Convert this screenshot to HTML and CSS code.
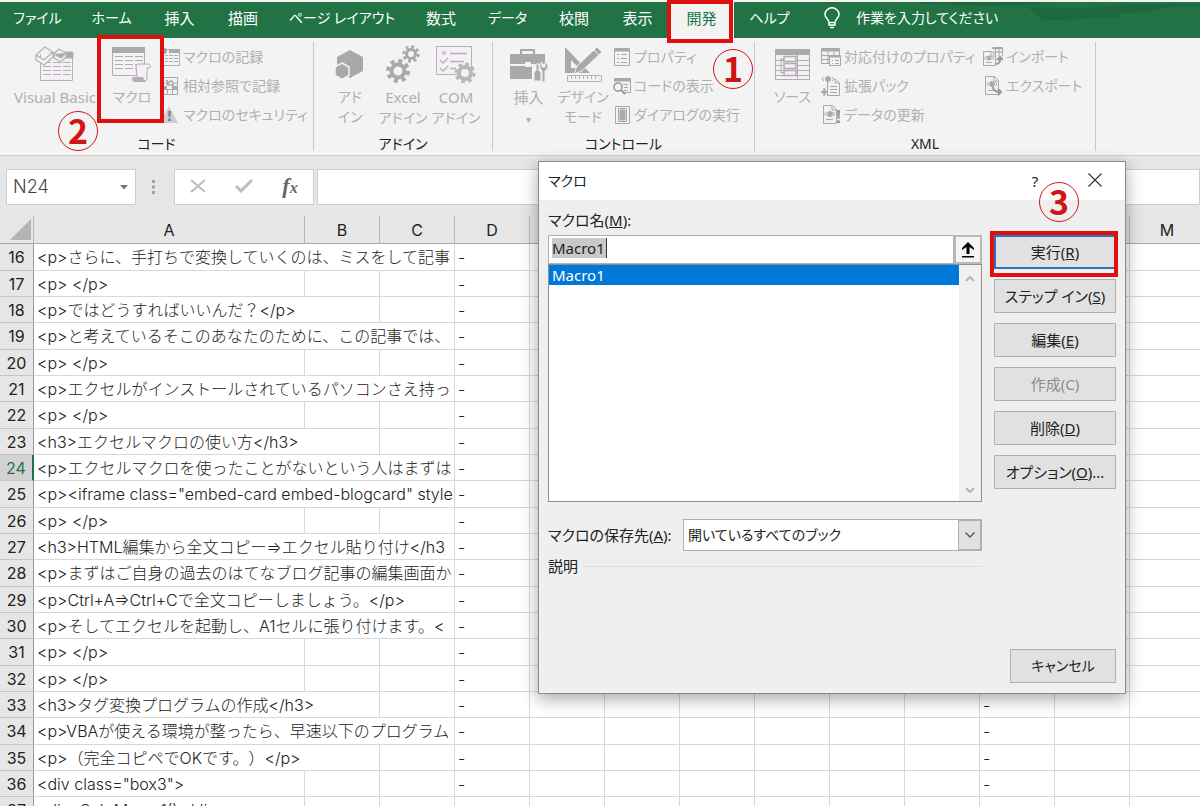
FILE: index.html
```
<!DOCTYPE html>
<html lang="ja">
<head>
    <meta charset="UTF-8">
    <meta name="viewport" content="width=device-width, initial-scale=1.0">
    <title>マクロ</title>
    <link rel="stylesheet" href="styles.css">
</head>
<body>
    <div class="app">
        <nav class="tabs">
            <button class="tab kana">ファイル</button>
            <button class="tab kana">ホーム</button>
            <button class="tab">挿入</button>
            <button class="tab">描画</button>
            <button class="tab kana">ページ レイアウト</button>
            <button class="tab">数式</button>
            <button class="tab kana">データ</button>
            <button class="tab">校閲</button>
            <button class="tab">表示</button>
            <button class="tab active">開発</button>
            <button class="tab kana">ヘルプ</button>
            <button class="tab kana tell-me">
                <svg width="16" height="22" viewBox="0 0 16 22" fill="none" stroke="#fff" stroke-width="1.5"><path d="M5 15.500C5 12 1 11.500 1 7.500a7 6.700 0 0 1 14 0C15 11.500 11 12 11 15.500zM5 15v3h6v-3M6 20.500h4"/></svg>
                作業を入力してください
            </button>
            <svg class="swirl" width="280" height="36" viewBox="0 0 280 36" fill="#1f673f"><path d="M0 0h120v2C80 4 40 3 0 2zM107 5c20 0 40 2 60 1 25-2 45-4 60-4h53v2c-20 0-35 1-40 3-20 5-30 5-45 3 12 5 5 6-10 6-30 0-55 5-65 0-5-3-8-8-13-11z"/></svg>
        </nav>

        <div class="ribbon">
            <section class="group group-code">
                <div class="group-body">
                    <button class="big" disabled>
                        <svg width="40" height="36" viewBox="0 0 40 36" fill="#f4f0f5" stroke="#b5b2b6"><path d="M5.500 6.500h32v28h-32z"/><path fill="#aaa" d="M20 6h18v6H20z"/><path fill="none" d="M8 16.500h8m2 0h8m2 0h8M8 20.500h8m2 0h8m2 0h8M8 24.500h8m2 0h8m2 0h8M8 28.500h8m2 0h8m2 0h8"/><path d="M1 9l9-8 8 5v5l-9 8-8-5zM1 9l8 5 9-8M19 8l5-5 7 4v4l-5 5-7-4zM19 8l7 4 5-5" stroke-width="1.200"/></svg>
                        <span>Visual Basic</span>
                    </button>
                    <button class="big" disabled>
                        <svg width="42" height="36" viewBox="0 0 42 36" fill="#f4f0f5" stroke="#b0adb1"><path d="M1.500 1.500h32v28h-32z"/><path fill="#aaa" stroke="none" d="M1 1h33v6H1z"/><path fill="none" d="M4 10.500h8m2 0h8m2 0h8M4 14.500h8m2 0h8m2 0h8M4 18.500h8m2 0h8m2 0h8M4 22.500h8m2 0h8m2 0h8"/><path d="M25 20c0-2 2-2 3-2h9c3 0 3 4 1 4h-2v9c0 3-1 4-3 4h-9c2 0 2-2 2-4z"/><path fill="#b5b2b6" d="M22 31.500h10c0 3 1 4 3 4H24c-3 0-3-3-2-4z"/></svg>
                        <span class="kana">マクロ</span>
                    </button>
                    <div class="small-list">
                        <button class="small" disabled><svg width="18" height="18" viewBox="0 0 18 18" fill="none" stroke="#b0adb1"><path d="M.5 1.500h17v16H.5z"/><path fill="#aaa" stroke="none" d="M7 1h11v4H7z"/><circle cx="2" cy="3" r="3" fill="#a3a3a3" stroke="none"/><path d="M3 7.500h3m1 0h4m1 0h4M3 10.500h3m1 0h4m1 0h4M3 13.500h3m1 0h4m1 0h4"/></svg>マクロの記録</button>
                        <button class="small" disabled><svg width="18" height="18" viewBox="0 0 18 18" fill="none" stroke="#aaa7ab"><path d="M.5.5h15v17H.5zM.5 12.500h15M5.500 12v5M10.500 12v5M.5 6h3M12 6h3"/><path fill="#aaa" stroke="none" d="M1 9h4v3H1zM10 9h5v3h-5z"/><path stroke-width="1.600" d="M5 8V3m0 5h5M5 8c5-9 8 0 5 3"/></svg>相対参照で記録</button>
                        <button class="small" disabled><svg width="18" height="18" viewBox="0 0 18 18"><path fill="#d0cdd1" d="M7 0l9 17H-2z"/><path fill="#888" d="M6 5h3l-.5 6h-2zM6 12.500h3V15H6z"/></svg>マクロのセキュリティ</button>
                    </div>
                </div>
                <h2>コード</h2>
            </section>

            <section class="group group-addin">
                <div class="group-body">
                    <button class="big" disabled>
                        <svg width="40" height="36" viewBox="0 0 40 36" fill="#a9a9a9"><path d="M20 4l13 7v14l-13 7-13-7V11z"/><path stroke="#f3f3f3" stroke-width="1.500" d="M12 17l7 4v8.500l-7 4-7-4V21z"/></svg>
                        <span class="kana">アド<br>イン</span>
                    </button>
                    <button class="big" disabled>
                        <svg width="40" height="36" viewBox="0 0 40 36" fill="none" stroke="#a9a9a9"><circle cx="15" cy="25" r="6.500" stroke-width="4"/><circle cx="15" cy="25" r="10" stroke-width="4" stroke-dasharray="4 3.850"/><circle cx="28" cy="8" r="4.500" stroke-width="3"/><circle cx="28" cy="8" r="7.200" stroke-width="3" stroke-dasharray="2.900 2.750"/></svg>
                        <span>Excel<br><span class="kana">アドイン</span></span>
                    </button>
                    <button class="big" disabled>
                        <svg width="42" height="38" viewBox="0 0 42 38" fill="none" stroke="#b5b2b6"><path fill="#f4f0f5" d="M1.500 1.500h35v28h-35z"/><circle cx="9" cy="8" r="1.500"/><path stroke-width="1.300" d="M5 15l3 3 5-5M5 23l3 3 5-5M15 8.500h17M15 16.500h14M15 23.500h6"/><circle cx="30" cy="28" r="6" fill="#f3f3f3" stroke="#b8b8b8" stroke-width="4"/><circle cx="30" cy="28" r="9" stroke="#b8b8b8" stroke-width="3" stroke-dasharray="3.600 3.470"/></svg>
                        <span>COM<br><span class="kana">アドイン</span></span>
                    </button>
                </div>
                <h2>アドイン</h2>
            </section>

            <section class="group group-control">
                <div class="group-body">
                    <button class="big" disabled>
                        <svg width="40" height="38" viewBox="0 0 40 38" fill="#a9a9a9"><path fill="none" stroke="#a9a9a9" stroke-width="2" d="M12 10V5h13v5"/><path d="M1 9h35v10H1zM1 21h22v13H1z"/><path fill="#f3f3f3" d="M16 17h6v5h-6z"/><path stroke="#f3f3f3" d="M27 19h3v7h2v10h-7V26h2zM33 37V26c-3-2-3-7 0-9v5h3v-5c4 2 4 7 0 9v11z"/></svg>
                        <span>挿入<br><small>▾</small></span>
                    </button>
                    <button class="big" disabled>
                        <svg width="40" height="38" viewBox="0 0 40 38" fill="#a9a9a9"><path fill-rule="evenodd" d="M2 2l25 26H2zM8 15v8h8z"/><path stroke="#f3f3f3" d="M11 29l3-8L34 2l5 5-20 19z"/><path stroke="#f3f3f3" d="M31 5l5 5"/><path fill="#f4f0f5" stroke="#b5b2b6" d="M4.500 30.500h34v6h-34z"/><path stroke="#b5b2b6" d="M8.500 31v3m4-3v3m4-3v3m4-3v3m4-3v3m4-3v3m4-3v3"/></svg>
                        <span class="kana">デザイン<br>モード</span>
                    </button>
                    <div class="small-list">
                        <button class="small" disabled><svg width="18" height="18" viewBox="0 0 18 18" fill="none" stroke="#aaa7ab"><path d="M1.500.5h15v17h-15z"/><path fill="#aaa" d="M2 1h14v2H2z"/><path d="M4 6.500h2m2 0h6M4 10.500h2m2 0h6M4 14.500h2m2 0h6"/></svg>プロパティ</button>
                        <button class="small" disabled><svg width="18" height="18" viewBox="0 0 18 18" fill="none" stroke="#aaa7ab"><path d="M1.500 5V1.500h16v14H11"/><path fill="#aaa" d="M2 2h15v2H2z"/><path d="M10 7.500h5M11 10.500h4M11 13.500h4"/><circle cx="5" cy="10" r="4" stroke="#999" stroke-width="1.600"/><path stroke="#999" stroke-width="2" d="M8 13l4 4"/></svg>コードの表示</button>
                        <button class="small" disabled><svg width="18" height="18" viewBox="0 0 18 18" fill="none" stroke="#aaa7ab"><path d="M2.500.5h14v17h-14zM5.500 2.500h8v13h-8z"/><path fill="#aaa" d="M7 4h5v10H7z"/></svg>ダイアログの実行</button>
                    </div>
                </div>
                <h2>コントロール</h2>
            </section>

            <section class="group group-xml">
                <div class="group-body">
                    <button class="big" disabled>
                        <svg width="36" height="36" viewBox="0 0 36 36" fill="#f4f0f5" stroke="#b0adb1"><path d="M.5 3.500h34v30H.5z"/><path fill="#aaa" stroke="none" d="M0 3h35v6H0z"/><path fill="none" d="M1 14.500h33M1 19.500h33M1 24.500h33M1 29.500h33M22.500 9v24M6 12v15M6 13.500h3m-3 6h3m-3 7h3"/><path stroke-width="1.500" d="M9 10.500h12v5H9zM9 17.500h12v5H9zM9 24.500h12v5H9z"/></svg>
                        <span class="kana">ソース</span>
                    </button>
                    <div class="small-list">
                        <button class="small" disabled><svg width="20" height="20" viewBox="0 0 20 20" fill="#f4f0f5" stroke="#aaa7ab"><path d="M.5 1.500h18v15H.5z"/><path fill="#aaa" d="M1 2h17v2H1z"/><path fill="none" d="M1 8.500h17M1 12.500h17M7 4v12M13 4v5"/><path d="M8.500 8.500h11v10h-11z"/><path fill="#aaa" d="M9 9h10v1H9z"/><path d="M11 13.500h1m2 0h4m-7 3h1m2 0h4"/></svg>対応付けのプロパティ</button>
                        <button class="small" disabled><svg width="20" height="20" viewBox="0 0 20 20" fill="none" stroke="#aaa7ab"><path fill="#f4f0f5" d="M6.500 6v13.500h12V7L14 2.500M14 3v4h4M9 10.500h7M9 13.500h7M9 16.500h7"/><circle cx="7" cy="3" r="2.500" fill="#aaa"/><path d="M3 1L1 3l2 2M11 1l2 2-2 2M3 12v7"/><path stroke-width="2" d="M0 16h7M3.500 12.500v7"/></svg>拡張パック</button>
                        <button class="small" disabled><svg width="20" height="20" viewBox="0 0 20 20" fill="none" stroke="#aaa7ab"><path fill="#f4f0f5" d="M2.500.5h9l4 4v14h-13zM11 1v4h4"/><circle cx="9" cy="9" r="2.500" fill="#aaa"/><path d="M5.500 7l-2 2 2 2M12 7l2 2-2 2M5 14.500h7"/><path fill="#999" stroke="none" d="M16 5h3l-.5 9h-2zM16 15.500h3V18h-3z"/></svg>データの更新</button>
                    </div>
                    <div class="small-list">
                        <button class="small" disabled><svg width="20" height="20" viewBox="0 0 20 20" fill="none" stroke="#aaa7ab"><path d="M9.500.5h10v9M9 1.500h10M10 5h9M12.500 1v7M16 1v8"/><path fill="#f4f0f5" d="M.5 4.500h8l4 4v10H.5zM8 5v4h4"/><circle cx="6" cy="11" r="2" fill="#aaa"/><path d="M3.500 9l-2 2 2 2M8.500 9l2 2-2 2M3 15.500h6"/><path stroke="#999" stroke-width="2" d="M13 17c4 0 4-3 4-6m-3 2l3-3 3 3"/></svg>インポート</button>
                        <button class="small" disabled><svg width="20" height="20" viewBox="0 0 20 20" fill="none" stroke="#aaa7ab"><path fill="#f4f0f5" d="M2.500.5h9l4 4v14h-13zM11 1v4h4"/><circle cx="9" cy="8" r="2.500" fill="#aaa"/><path d="M5.500 6l-2 2 2 2M12 6l2 2-2 2M5 14.500h5"/><path stroke="#999" stroke-width="2" d="M10 11c0 4 3 5 8 5m-3-3l3 3-3 3"/></svg>エクスポート</button>
                    </div>
                </div>
                <h2>XML</h2>
            </section>
        </div>

        <div class="formula-bar">
            <div class="name-box">
                <input type="text" value="N24" aria-label="名前ボックス">
                <svg width="8" height="5" viewBox="0 0 8 5"><path fill="#777" d="M0 0h8L4 4.500z"/></svg>
            </div>
            <svg class="dots" width="3" height="14" viewBox="0 0 3 14" fill="#a0a0a0"><path d="M0 0h3v3H0zM0 5.500h3v3H0zM0 11h3v3H0z"/></svg>
            <div class="fx-box">
                <button aria-label="キャンセル"><svg width="16" height="14" viewBox="0 0 16 14" stroke="#bdbdbd" stroke-width="2"><path d="M1 1l14 12M15 1L1 13"/></svg></button>
                <button aria-label="入力"><svg width="18" height="14" viewBox="0 0 18 14" fill="none" stroke="#bdbdbd" stroke-width="3"><path d="M1 7l5 5L17 1"/></svg></button>
                <button class="fx" aria-label="関数の挿入">f<sub>x</sub></button>
            </div>
            <input class="formula" type="text" aria-label="数式バー">
        </div>

        <table class="sheet">
            <colgroup>
                <col class="col-num"><col class="col-a">
                <col><col><col><col><col><col><col><col><col><col><col><col>
            </colgroup>
            <thead>
                <tr>
                    <th class="corner"><svg width="21" height="21" viewBox="0 0 21 21"><path fill="#b4b4b4" d="M21 0v21H0z"/></svg></th>
                    <th>A</th><th>B</th><th>C</th><th>D</th><th>E</th><th>F</th><th>G</th>
                    <th>H</th><th>I</th><th>J</th><th>K</th><th>L</th><th>M</th>
                </tr>
            </thead>
            <tbody id="rows"></tbody>
        </table>

        <div class="dialog" role="dialog" aria-labelledby="dialogTitle">
            <div class="title-bar">
                <span id="dialogTitle" class="kana">マクロ</span>
                <button aria-label="ヘルプ">?</button>
                <button aria-label="閉じる"><svg width="14" height="14" viewBox="0 0 14 14" stroke="#333" stroke-width="1.200"><path d="M.5.5l13 13M13.500.5l-13 13"/></svg></button>
            </div>
            <div class="dialog-body">
                <div class="left">
                    <label for="macroName">マクロ名(<u>M</u>):</label>
                    <div class="name-row">
                        <input type="text" id="macroName" value="Macro1">
                        <button aria-label="参照"><svg width="12" height="16" viewBox="0 0 12 16"><path d="M6 0l6 6v2L7.500 5v7h-3V5L0 8V6zM0 14h12v1.500H0z"/></svg></button>
                    </div>
                    <div class="list">
                        <ul role="listbox" aria-label="マクロ名">
                            <li role="option" aria-selected="true">Macro1</li>
                        </ul>
                        <div class="scroll">
                            <svg width="10" height="6" viewBox="0 0 10 6" fill="none" stroke="#b5b5b5" stroke-width="2"><path d="M1 5l4-4 4 4"/></svg>
                            <svg width="10" height="6" viewBox="0 0 10 6" fill="none" stroke="#b5b5b5" stroke-width="2"><path d="M1 1l4 4 4-4"/></svg>
                        </div>
                    </div>
                    <div class="store-row">
                        <label for="store">マクロの保存先(<u>A</u>):</label>
                        <div class="select">
                            <select id="store" class="kana"><option>開いているすべてのブック</option></select>
                            <span class="arrow"><svg width="10" height="6" viewBox="0 0 10 6" fill="none" stroke="#555" stroke-width="1.300"><path d="M.5.5L5 5 9.500.5"/></svg></span>
                        </div>
                    </div>
                    <fieldset>
                        <legend>説明</legend>
                    </fieldset>
                </div>
                <div class="actions">
                    <button class="btn default">実行(<u>R</u>)</button>
                    <button class="btn">ステップ イン(<u>S</u>)</button>
                    <button class="btn">編集(<u>E</u>)</button>
                    <button class="btn" disabled>作成(C)</button>
                    <button class="btn">削除(<u>D</u>)</button>
                    <button class="btn">オプション(<u>O</u>)...</button>
                </div>
            </div>
            <div class="footer">
                <button class="btn cancel kana">キャンセル</button>
            </div>
        </div>

        <div class="mark mark-tab"></div>
        <div class="mark mark-macro"></div>
        <div class="mark mark-run"></div>
        <div class="step step-1">1</div>
        <div class="step step-2">2</div>
        <div class="step step-3">3</div>
    </div>

    <script>
        // text, number of columns it covers
        const lines = [
            ['<p>さらに、手打ちで変換していくのは、ミスをして記事', 3],
            ['<p> </p>', 1],
            ['<p>ではどうすればいいんだ？</p>', 2],
            ['<p>と考えているそこのあなたのために、この記事では、', 3],
            ['<p> </p>', 1],
            ['<p>エクセルがインストールされているパソコンさえ持っ', 3],
            ['<p> </p>', 1],
            ['<h3>エクセルマクロの使い方</h3>', 2],
            ['<p>エクセルマクロを使ったことがないという人はまずは', 3],
            ['<p><iframe class="embed-card embed-blogcard" style', 3],
            ['<p> </p>', 1],
            ['<h3>HTML編集から全文コピー⇒エクセル貼り付け</h3', 3],
            ['<p>まずはご自身の過去のはてなブログ記事の編集画面か', 3],
            ['<p>Ctrl+A⇒Ctrl+Cで全文コピーしましょう。</p>', 3],
            ['<p>そしてエクセルを起動し、A1セルに張り付けます。<', 3],
            ['<p> </p>', 1],
            ['<p> </p>', 1],
            ['<h3>タグ変換プログラムの作成</h3>', 2],
            ['<p>VBAが使える環境が整ったら、早速以下のプログラム', 3],
            ['<p>（完全コピペでOKです。）</p>', 2],
            ['<div class="box3">', 1],
            ['<div>Sub Macro1()</div>', 1]
        ];
        const rows = document.getElementById('rows');

        lines.forEach(function(line, i) {
            const tr = rows.insertRow();
            const th = document.createElement('th');
            th.textContent = 16 + i;
            tr.appendChild(th);
            if (16 + i === 24) {
                tr.className = 'current';
            }

            const first = tr.insertCell();
            first.colSpan = line[1];
            first.textContent = line[0];

            for (let col = line[1]; col < 13; col++) {
                // columns D and K hold a dash
                tr.insertCell().textContent = (col === 3 || col === 10) ? '-' : '';
            }
        });
    </script>
</body>
</html>
```
FILE: styles.css
```
* {
    box-sizing: border-box;
}
body {
    margin: 0;
    overflow: hidden;
    font-family: "Noto Sans", "Noto Sans CJK JP", sans-serif;
    font-size: 15px;
    line-height: 20px;
    font-feature-settings: "palt";
    color: #222;
}
button, input, select {
    font: inherit;
    font-feature-settings: inherit;
    color: inherit;
    margin: 0;
    padding: 0;
    border: none;
    border-radius: 0;
    background: none;
    white-space: nowrap;
}
svg {
    flex: none;
}
.kana {
    font-size: 14px;
}
.app {
    position: relative;
    height: 100vh;
    overflow: hidden;
    background: #e6e6e6;
}

/* tabs */
.tabs {
    position: relative;
    display: grid;
    grid-template-columns: 75px 73px 63px 64px 134px 64px 69px 64px 63px 65px 71px 1fr;
    height: 38px;
    border-top: 2px solid #f3f3f3;
    background: #217346;
    color: #fff;
}
.tab.active {
    background: #f3f3f3;
    color: #217346;
}
.tab {
    padding-bottom: 4px;
}
.tell-me {
    position: relative;
    z-index: 1;
    display: flex;
    align-items: center;
    gap: 16px;
    padding-left: 19px;
}
.swirl {
    position: absolute;
    top: 0;
    right: 0;
}

/* ribbon */
.ribbon {
    display: flex;
    height: 118px;
    padding: 4px 0;
    background: #f3f3f3;
    border-bottom: 1px solid #d0d0d0;
}
.group {
    display: flex;
    flex-direction: column;
    justify-content: space-between;
    border-right: 1px solid #c8c8c8;
}
.group-code {
    width: 314px;
}
.group-addin {
    width: 179px;
}
.group-control {
    width: 262px;
}
.group-xml {
    width: 341px;
}
.group h2 {
    margin: 0;
    font-size: 14px;
    font-weight: normal;
    line-height: 14px;
    text-align: center;
}
.group-body {
    display: grid;
    justify-content: start;
}
.group-code .group-body {
    grid-template-columns: 94px 60px auto;
    padding-left: 8px;
}
.group-addin .group-body {
    grid-template-columns: 54px 52px 54px;
    padding-left: 9px;
}
.group-control .group-body {
    grid-template-columns: 49px 60px auto;
    padding-left: 11px;
}
.group-xml .group-body {
    grid-template-columns: 57px 162px auto;
    padding-left: 9px;
}
.big {
    display: flex;
    flex-direction: column;
    align-items: center;
    gap: 4px;
    padding-top: 3px;
    color: #b0b0b0;
}
.big svg {
    height: 38px;
}
.big small {
    font-size: 10px;
}
.small-list {
    display: flex;
    flex-direction: column;
}
.small {
    display: flex;
    align-items: center;
    gap: 3px;
    height: 29px;
    font-size: 14px;
    color: #b0b0b0;
}

/* formula bar */
.formula-bar {
    display: flex;
    align-items: center;
    height: 60px;
    padding: 13px 0 11px 6px;
}
.name-box, .fx-box, .formula {
    height: 36px;
    border: 1px solid #cfcfcf;
    background: #fff;
}
.name-box {
    display: flex;
    align-items: center;
    width: 130px;
    padding: 0 7px 0 6px;
}
.name-box input {
    flex: 1;
    min-width: 0;
    font-family: Inter, sans-serif;
    font-size: 18px;
    font-weight: 300;
    color: #444;
}
.dots {
    margin: 0 19px 0 16px;
}
.fx-box {
    display: grid;
    grid-template-columns: 1fr 1fr 1fr;
    width: 140px;
    margin-right: 3px;
}
.fx {
    font-family: "Liberation Serif", serif;
    font-size: 22px;
    font-style: italic;
    font-weight: bold;
    color: #666;
}
.fx sub {
    font-size: 16px;
    vertical-align: baseline;
}
.formula {
    flex: 1;
    padding: 0 8px;
}

/* sheet */
.sheet {
    width: 1205px;
    table-layout: fixed;
    border-collapse: separate;
    border-spacing: 0;
    font-family: Inter, "Noto Sans CJK JP", sans-serif;
    font-size: 16px;
    font-weight: 300;
    font-feature-settings: normal;
    text-spacing-trim: space-all;
    color: #222;
}
.col-num {
    width: 34px;
}
.col-a {
    width: 271px;
}
.sheet th {
    padding: 0;
    font-weight: normal;
    border-right: 1px solid #b8b8b8;
    background: #e6e6e6;
}
.sheet thead th {
    height: 28px;
    border-bottom: 1px solid #a8a8a8;
}
.sheet .corner svg {
    display: block;
    margin-left: 10px;
}
.sheet tbody tr {
    height: 26px;
}
.sheet tbody tr:nth-child(3n+1) {
    height: 27px;
}
.sheet tbody th {
    border-right-color: #999;
    border-bottom: 1px solid #c4c4c4;
}
.sheet td {
    padding: 0 0 0 3px;
    overflow: hidden;
    white-space: nowrap;
    background: #fff;
    border-right: 1px solid #d8d8d8;
    border-bottom: 1px solid #d8d8d8;
}
.sheet .current th {
    background: #d2d2d2;
    color: #217346;
    border-right: 2px solid #217346;
}

/* macro dialog */
.dialog {
    position: absolute;
    left: 538px;
    top: 161px;
    width: 588px;
    border: 1px solid #8a8a8a;
    background: #efefef;
    box-shadow: 0 5px 16px rgba(0, 0, 0, 0.35);
}
.title-bar {
    display: grid;
    grid-template-columns: 1fr 60px 60px;
    align-items: center;
    height: 38px;
    padding-left: 9px;
    background: #fff;
}
.dialog-body {
    display: grid;
    grid-template-columns: 1fr 122px;
    gap: 12px;
    padding: 10px 9px 0 9px;
}
.left > label {
    display: block;
    height: 25px;
}
.name-row {
    display: grid;
    grid-template-columns: 1fr 28px;
    height: 29px;
}
.name-row input {
    min-width: 0;
    padding: 0 0 3px 3px;
    border: 1px solid #b0b0b0;
    color: #222;
    background: linear-gradient(#333, #333) 57px 2px / 1px 20px no-repeat,
        linear-gradient(#c8c8c8, #c8c8c8) 3px 2px / 54px 20px no-repeat, #fff;
}
.name-row button {
    display: flex;
    align-items: center;
    justify-content: center;
    border: 2px solid #b8b8b8;
    background: #f5f5f5;
}
.list {
    display: grid;
    grid-template-columns: 1fr 22px;
    height: 238px;
    border: 1px solid #8f8f8f;
    background: #fff;
}
.list ul {
    margin: 0;
    padding: 0;
    list-style: none;
}
.list li {
    padding-left: 3px;
    background: #0078d7;
    color: #fff;
}
.scroll {
    display: flex;
    flex-direction: column;
    align-items: center;
    justify-content: space-between;
    padding: 11px 0 8px;
    background: #f0f0f0;
}
.store-row {
    display: grid;
    grid-template-columns: 1fr 299px;
    align-items: center;
    margin-top: 17px;
    white-space: nowrap;
}
.select {
    position: relative;
}
.select select {
    width: 100%;
    height: 32px;
    padding-left: 4px;
    border: 1px solid #b0b0b0;
    background: #fff;
    appearance: none;
}
.arrow {
    position: absolute;
    top: 1px;
    right: 1px;
    bottom: 1px;
    width: 23px;
    display: flex;
    align-items: center;
    justify-content: center;
    border: 1px solid #b0b0b0;
    background: #e1e1e1;
    pointer-events: none;
}
fieldset {
    min-height: 93px;
    margin: 5px 0 0;
    padding: 0;
    border: none;
    border-top: 1px solid #dcdcdc;
}
legend {
    padding: 0 5px 0 0;
}
.actions {
    display: flex;
    flex-direction: column;
    gap: 10px;
    padding-top: 25px;
}
.btn {
    height: 34px;
    border: 1px solid #b0b0b0;
    background: #e1e1e1;
}
.btn:disabled {
    color: #8c8c8c;
}
.btn.default {
    border: 2px solid #2b73b9;
}
.footer {
    display: flex;
    justify-content: flex-end;
    padding: 0 9px 10px;
}
.cancel {
    width: 106px;
}

/* numbered steps */
.mark {
    position: absolute;
    border: 4px solid #e01010;
}
.mark-tab {
    left: 667px;
    top: 0;
    width: 66px;
    height: 43px;
}
.mark-macro {
    left: 97px;
    top: 35px;
    width: 67px;
    height: 88px;
}
.mark-run {
    left: 990px;
    top: 231px;
    width: 128px;
    height: 46px;
}
.step {
    position: absolute;
    width: 40px;
    height: 40px;
    border: 1px solid #d01515;
    border-radius: 50%;
    font-family: "Noto Sans CJK JP", sans-serif;
    font-size: 34px;
    font-weight: bold;
    line-height: 36px;
    text-align: center;
    color: #d01515;
}
.step-1 {
    left: 713px;
    top: 49px;
}
.step-2 {
    left: 58px;
    top: 111px;
}
.step-3 {
    left: 1039px;
    top: 182px;
}
```
